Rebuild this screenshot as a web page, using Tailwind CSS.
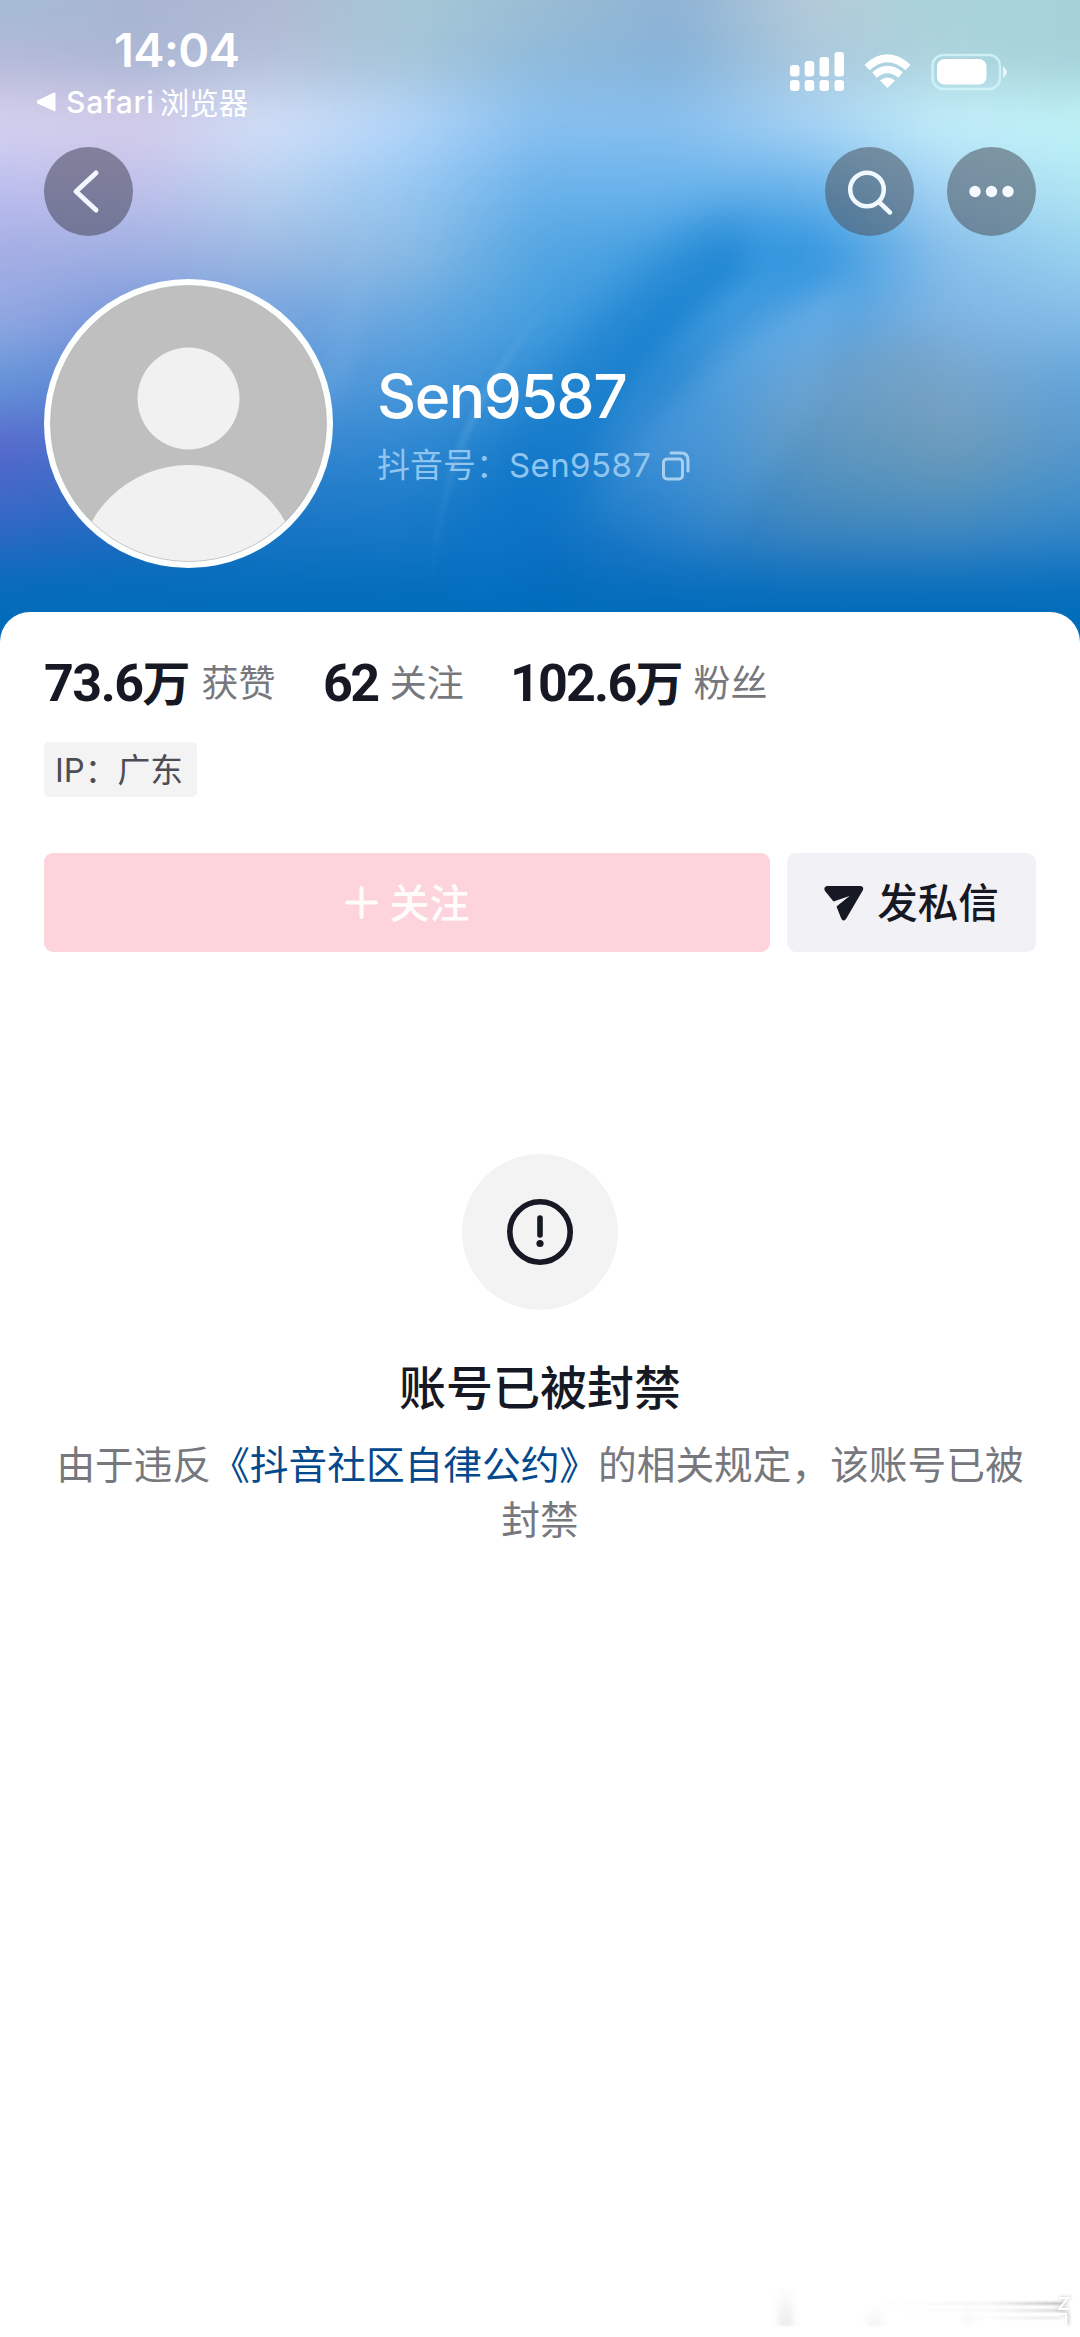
<!DOCTYPE html>
<html lang="zh-CN">
<head>
<meta charset="utf-8">
<title>Sen9587</title>
<script src="https://cdn.jsdelivr.net/npm/@tailwindcss/browser@4"></script>
</head>
<body class="bg-white">
<main class="relative flex h-[2337px] w-[1080px] flex-col overflow-hidden bg-[#006cba] font-['Inter','Noto_Sans_CJK_SC',sans-serif]">
  <!-- cover -->
  <svg id="cover" class="absolute top-0 left-0" width="1080" height="660" viewBox="0 0 1080 660">
    <defs>
      <filter id="v" x="-10%" y="-20%" width="120%" height="140%" color-interpolation-filters="sRGB"><feGaussianBlur stdDeviation="20 27"/></filter>
      <filter id="b4" x="-50%" y="-50%" width="200%" height="200%" color-interpolation-filters="sRGB"><feGaussianBlur stdDeviation="3"/></filter>
      <filter id="b12" x="-50%" y="-50%" width="200%" height="200%" color-interpolation-filters="sRGB"><feGaussianBlur stdDeviation="12"/></filter>
      <filter id="b22" x="-50%" y="-50%" width="200%" height="200%" color-interpolation-filters="sRGB"><feGaussianBlur stdDeviation="24"/></filter>
      <linearGradient id="edge" x1="0" x2="1" y1="1" y2="0"><stop offset="0" stop-color="#9cd2f6" stop-opacity="0"/><stop offset=".5" stop-color="#9cd2f6" stop-opacity=".35"/><stop offset="1" stop-color="#9cd2f6" stop-opacity="0"/></linearGradient>
      <linearGradient id="haze" gradientUnits="userSpaceOnUse" x1="700" y1="300" x2="620" y2="540"><stop offset="0" stop-color="#74b4ea" stop-opacity=".45"/><stop offset="1" stop-color="#74b4ea" stop-opacity="0"/></linearGradient>
    </defs>
    <g id="mesh" filter="url(#v)"></g>
    <path d="M770 225C680 300 560 400 520 590L450 600C470 450 600 290 720 215Z" fill="#0874c8" opacity=".5" filter="url(#b22)"/>
    <path d="M740 255C660 320 590 390 545 520" fill="none" stroke="#0a76c8" stroke-width="30" opacity=".4" filter="url(#b12)"/>
    <path d="M850 280C730 335 640 410 560 560L700 580L820 400Z" fill="url(#haze)" filter="url(#b12)"/>
    <ellipse cx="850" cy="400" rx="110" ry="60" fill="#7295a8" opacity=".25" transform="rotate(-25 850 400)" filter="url(#b22)"/>
    <path d="M355 190C372 270 345 330 330 400" fill="none" stroke="#9cc8f0" stroke-width="16" opacity=".22" filter="url(#b12)"/>
    <path d="M560 290C500 360 440 440 430 600" fill="none" stroke="url(#edge)" stroke-width="4" filter="url(#b4)"/>
  </svg>

  <header class="relative flex h-[612px] flex-col text-white">
    <div class="flex h-[147px] justify-between">
      <div class="pt-[21px] pl-[36px]">
        <div class="pl-[78px] text-[47px] leading-[58px] font-semibold tracking-[-0.6px]">14:04</div>
        <div class="flex h-[46px] items-center">
          <svg width="20" height="22" viewBox="0 0 20 22"><path d="M18 1.500Q19.500 1 19.500 3V19Q19.500 21 18 20L1.500 12.500Q0 11 1.500 9.500Z" fill="#fff"/></svg>
          <span class="ml-[10px] text-[30px] tracking-[0.800px] font-medium">Safari</span><span class="ml-[5px] pt-[2px] text-[29.500px]">浏览器</span>
        </div>
      </div>
      <svg class="mt-[48px] mr-[68px]" width="222" height="46" viewBox="790 48 222 46" fill="#fff">
        <rect x="790" y="65" width="9.500" height="11.500" rx="3"/><rect x="804.700" y="61" width="9.500" height="15.500" rx="3"/><rect x="819.500" y="57" width="9.500" height="19.500" rx="3"/><rect x="834.500" y="52" width="9.500" height="24.500" rx="3"/>
        <rect x="790" y="80" width="9.500" height="11" rx="3"/><rect x="804.700" y="80" width="9.500" height="11" rx="3"/><rect x="819.500" y="80" width="9.500" height="11" rx="3"/><rect x="834.500" y="80" width="9.500" height="11" rx="3"/>
        <path d="M867 67.500Q887.500 49 908 67.500" fill="none" stroke="#fff" stroke-width="7.500"/><path d="M874.500 75Q887.500 64 900.500 75" fill="none" stroke="#fff" stroke-width="7"/><path d="M887.500 88L880 80.500Q887.500 74.500 895 80.500Z"/>
        <rect x="932.500" y="55" width="67.500" height="34" rx="11" fill="none" stroke="#d8f7fb" stroke-width="2.500" opacity=".75"/><rect x="937" y="59" width="49.500" height="25.500" rx="7.500"/><path d="M1003 66Q1007 70 1007 72T1003 78Z" opacity=".75"/>
      </svg>
    </div>
    <nav class="flex h-[88px] items-center px-[44px]">
      <div class="h-[89px] w-[89px] rounded-full bg-[#46465a]/55"><svg width="89" height="89" viewBox="0 0 89 89" fill="none" stroke="#f2f6ff" stroke-width="5" stroke-linecap="round" stroke-linejoin="round"><path d="M52 26L32 44.500L52 63"/></svg></div>
      <div class="ml-auto h-[89px] w-[89px] rounded-full bg-[#4a525c]/55"><svg width="89" height="89" viewBox="0 0 89 89" fill="none" stroke="#f0f8ff" stroke-width="4.500" stroke-linecap="round"><circle cx="42" cy="42.500" r="16.800"/><path d="M54 55L65 65.500"/></svg></div>
      <div class="ml-[33px] h-[89px] w-[89px] rounded-full bg-[#4a525c]/55"><svg width="89" height="89" viewBox="0 0 89 89" fill="#f4faff"><circle cx="28" cy="44.500" r="5.700"/><circle cx="44.500" cy="44.500" r="5.700"/><circle cx="61" cy="44.500" r="5.700"/></svg></div>
    </nav>
    <section class="mt-[44px] flex pl-[44px]">
      <svg width="289" height="289" viewBox="0 0 289 289"><defs><clipPath id="face"><circle cx="144.500" cy="144.500" r="138"/></clipPath></defs><circle cx="144.500" cy="144.500" r="144.500" fill="#fdffff"/><g clip-path="url(#face)"><rect width="289" height="289" fill="#bfbfbf"/><circle cx="144.500" cy="119.500" r="51" fill="#f1f1f1"/><circle cx="144.500" cy="297" r="111" fill="#f1f1f1"/></g><circle cx="144.500" cy="144.500" r="138" fill="none" stroke="#aaa" stroke-opacity=".55"/></svg>
      <div class="ml-[44px] pt-[80px]">
        <h1 class="text-[60.500px] leading-[74px] font-medium tracking-[-1.400px]">Sen9587</h1>
        <div class="mt-[10px] flex h-[46px] items-center text-[33px] text-[#90c5ef]">
          <span>抖音号：</span><span class="tracking-[0.400px]">Sen9587</span>
          <svg class="ml-[11px]" width="28" height="30" viewBox="0 0 28 30" fill="none" stroke="#a9cfee" stroke-width="3"><rect x="1.500" y="8" width="19" height="20" rx="3.500"/><path d="M9 2H19Q26 2 26 9V20" stroke-linecap="round"/></svg>
        </div>
      </div>
    </section>
  </header>

  <section class="relative flex-1 rounded-t-[30px] bg-white px-[44px] pt-[46px] text-[#161823]">
    <div class="flex h-[52px] items-center">
      <div class="flex w-[279px] items-center"><b class="font-['Roboto'] text-[52px] tracking-[-1.500px]">73.6</b><b class="text-[48px] tracking-[-1px]">万</b><span class="ml-[12px] text-[37px] text-[#77787d]">获赞</span></div>
      <div class="flex w-[187px] items-center"><b class="font-['Roboto'] text-[52px] tracking-[-2.500px]">62</b><span class="ml-[12px] text-[37px] text-[#77787d]">关注</span></div>
      <div class="flex items-center"><b class="font-['Roboto'] text-[52px] tracking-[-1.800px]">102.6</b><b class="text-[48px] tracking-[-1px]">万</b><span class="ml-[11px] text-[37px] text-[#77787d]">粉丝</span></div>
    </div>
    <div class="mt-[32px] flex h-[55px] w-[153px] items-center rounded-[5px] bg-[#f3f3f4] pt-[2px] pl-[11px] text-[32.800px] text-[#4c4d54]">IP：广东</div>
    <div class="mt-[56px] flex h-[99px] gap-[17px]">
      <div class="flex w-[726px] items-center justify-center rounded-[9px] bg-[#fdd4dc] text-[40px] font-medium text-[#fffdfc]"><svg class="mr-[12px]" width="33" height="33" viewBox="0 0 33 33" stroke="#fffdfa" stroke-width="4" stroke-linecap="round"><path d="M2 16.500H31M16.500 2V31"/></svg><span class="pt-[2px]">关注</span></div>
      <div class="flex w-[249px] items-center justify-center rounded-[9px] bg-[#f2f1f5] text-[40.500px] font-medium"><svg class="mt-[2px] mr-[13px]" width="40" height="36" viewBox="0 0 40 36"><path d="M3 0H36Q40 0 39 4L22 33Q19 36.500 17 32L12.500 20.500L25.500 10L9.500 15.500L1 5Q-1 1 3 0Z" fill="#161823"/></svg><span class="pt-[3px]">发私信</span></div>
    </div>
    <div class="mt-[202px] flex flex-col items-center">
      <div class="h-[156px] w-[156px] rounded-full bg-[#f3f3f4]"><svg width="156" height="156" viewBox="0 0 156 156"><circle cx="78" cy="78" r="30.200" fill="none" stroke="#161823" stroke-width="5.600"/><path d="M78 64V81" stroke="#161823" stroke-width="5.600" stroke-linecap="round"/><circle cx="78" cy="89.500" r="3.600" fill="#161823"/></svg></div>
      <h2 class="mt-[43px] text-[47px] leading-[70px] font-medium">账号已被封禁</h2>
      <p class="mt-[15px] text-center text-[38.700px] leading-[55px] whitespace-nowrap text-[#77787d]">由于违反<span class="text-[#04498d]">《抖音社区自律公约》</span>的相关规定，该账号已被<br>封禁</p>
    </div>
  </section>
  <!-- faint smear in the bottom corner -->
  <svg class="absolute right-0 bottom-0" width="320" height="77" viewBox="0 0 320 77">
    <defs>
      <linearGradient id="smear" gradientUnits="userSpaceOnUse" x1="120" x2="304" y1="0" y2="0"><stop offset="0" stop-color="#777" stop-opacity="0"/><stop offset=".6" stop-color="#777" stop-opacity=".08"/><stop offset="1" stop-color="#666" stop-opacity=".45"/></linearGradient>
      <linearGradient id="bar" x1="0" x2="0" y1="0" y2="1"><stop offset="0" stop-color="#888" stop-opacity="0"/><stop offset="1" stop-color="#888" stop-opacity=".16"/></linearGradient>
      <filter id="soft" x="-50%" y="-50%" width="200%" height="200%"><feGaussianBlur stdDeviation="1.500"/></filter>
      <filter id="softer" x="-50%" y="-50%" width="200%" height="200%"><feGaussianBlur stdDeviation="3 1"/></filter>
    </defs>
    <g filter="url(#softer)">
      <rect x="18" y="28" width="15" height="38" fill="url(#bar)"/>
      <rect x="108" y="44" width="14" height="22" fill="url(#bar)" opacity=".6"/><rect x="206" y="38" width="5" height="28" fill="url(#bar)" opacity=".6"/>
      <rect x="110" y="42" width="194" height="3" fill="url(#smear)"/><rect x="130" y="49" width="174" height="3" fill="url(#smear)" opacity=".6"/><rect x="150" y="57" width="152" height="2" fill="url(#smear)" opacity=".5"/>
    </g>
    <path d="M299 38H308L299 49H309M301 54H308V65" fill="none" stroke="#777" stroke-width="4" opacity=".25" filter="url(#soft)"/>
    <path d="M299 38H308L299 49H309M300 54H306V65" fill="none" stroke="#fff" stroke-width="2"/>
  </svg>
</main>
<script>
// Each row is a horizontal colour ramp; the shared blur melts the rows into one another.
const rows=[
[-60,90,'a3bcd6 a9b5d2 b0b8d2 a5c8d6 9bbdd3 8fb2d4 b5cbd8 a8d3d9 a5d2d9'],
[30,60,'b4b8d6 a9b6d4 b4c0d8 a6c5d8 8fbada 85b2d8 aac8dc acd3dc a4d1d8'],
[90,65,'d6d2f0 d6cdea d3e0f9 b4d6fa 88c0f0 88c0ef a9d4f5 c4f0fb c0f4f7'],
[155,65,'bcbfee c0c0ea b7d2f0 98c8f2 6bb2ea 6bb4ec 6ab4ea a8d4f4 b0e6f3'],
[220,65,'a5aee4 a0b0e2 9bb9e2 8bbbe4 52a5e2 45a0e0 2b92de 88bfea 98d2ee'],
[285,65,'93a8e2 7898da 76a4de 68a8e0 449edf 3594da 4fa2e2 7eb4e4 84bce8'],
[350,65,'6496d8 5a80d4 5a96d8 4a98da 3490d6 2c8ad2 64a3da 78a6cc 62a4d8'],
[415,60,'5a66cc 4478cc 3a88d0 3088d2 1f80cc 3a8cd4 5496c8 6f9cb8 5898cc'],
[475,60,'3c68c6 2c6cc4 2078c8 1c7cc8 1276c6 2c84cc 4a8cbd 4f90be 3e8eca'],
[535,40,'1a68c0 106cbe 0e72c0 1074c4 0a6cc0 1e78c6 2a7ac0 2c7cc2 227ac4'],
[575,140,'006cba 006cba 006cba 006cba 006cba 006cba 006cba 006cba 006cba']];
let out='';
rows.forEach(([y,h,c],i)=>{
  const stops=c.split(' ').map((k,j)=>`<stop offset="${(100+j*135)/1280}" stop-color="#${k}"/>`).join('');
  const top=i?y:-120, hh=i?h+2:152;
  out+=`<linearGradient id="r${i}" gradientUnits="userSpaceOnUse" x1="-100" x2="1180" y1="0" y2="0">${stops}</linearGradient><rect x="-100" y="${top}" width="1280" height="${hh}" fill="url(#r${i})"/>`;
});
document.getElementById('mesh').innerHTML=out;
</script>
</body>
</html>
